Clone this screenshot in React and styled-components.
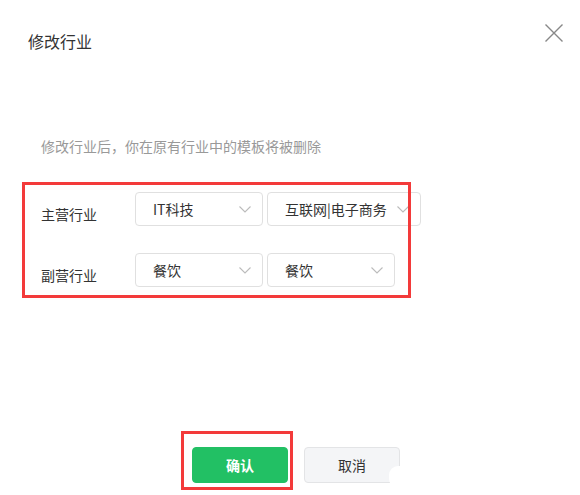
import React from 'react';
import styled, {createGlobalStyle} from 'styled-components';

const GlobalStyle = createGlobalStyle`
  html, body {
    margin: 0;
    padding: 0;
    background: #fff;
  }
  body {
    font-family: "Noto Sans CJK SC", "Noto Sans", "Liberation Sans", sans-serif;
    color: #333;
  }
`;

const Dialog = styled.div`
  position: relative;
  width: 580px;
  height: 495px;
  background: #fff;
  box-sizing: border-box;
`;

const Header = styled.div`
  display: flex;
  justify-content: space-between;
  align-items: flex-start;
  padding: 29px 16px 0 28px;
  height: 60px;
  box-sizing: border-box;
`;

const Title = styled.h2`
  margin: 0;
  font-size: 16px;
  font-weight: 400;
  line-height: 24px;
  color: #333;
`;

const Close = styled.button`
  width: 20px;
  height: 20px;
  margin-top: -6px;
  padding: 0;
  border: none;
  background: none;
  cursor: pointer;
  svg { display: block; }
`;

const Hint = styled.p`
  margin: 76px 0 0 41px;
  font-size: 14px;
  line-height: 20px;
  color: #999;
`;

const FormArea = styled.div`
  position: relative;
  margin-top: 36px;
  display: flex;
  flex-direction: column;
  gap: 27px;
  padding-left: 41px;
`;

const Row = styled.div`
  display: flex;
  align-items: flex-start;
`;

const Label = styled.span`
  width: 94px;
  margin-top: 12px;
  font-size: 14px;
  line-height: 20px;
  color: #333;
`;

const Selects = styled.div`
  display: flex;
  gap: 4px;
`;

const Select = styled.div`
  display: flex;
  align-items: center;
  justify-content: space-between;
  gap: 10px;
  min-width: 128px;
  height: 34px;
  box-sizing: border-box;
  padding: 0 11px 0 17px;
  border: 1px solid #e0e0e0;
  border-radius: 4px;
  background: #fff;
  font-size: 14px;
  color: #333;
  white-space: nowrap;
`;

const Mark = styled.div`
  position: absolute;
  left: ${p => p.$left}px;
  top: ${p => p.$top}px;
  width: ${p => p.$w}px;
  height: ${p => p.$h}px;
  border: 3px solid #f33a3a;
  box-sizing: border-box;
  pointer-events: none;
`;

const Footer = styled.div`
  position: relative;
  display: flex;
  justify-content: center;
  gap: 16px;
  padding-left: 12px;
  margin-top: 160px;
`;

const Button = styled.button`
  width: 96px;
  height: 36px;
  border-radius: 4px;
  font-family: inherit;
  font-size: 14px;
  cursor: pointer;
  border: 1px solid ${p => (p.$primary ? '#22c064' : '#e3e4e6')};
  background: ${p => (p.$primary ? '#22c064' : '#f4f5f7')};
  color: ${p => (p.$primary ? '#fff' : '#333')};
  font-weight: ${p => (p.$primary ? 600 : 400)};
`;

const Blot = styled.div`
  position: absolute;
  left: 389px;
  top: 19px;
  width: 14px;
  height: 22px;
  border-radius: 9px 0 0 9px;
  background: #fff;
`;

const Chevron = () => (
  <svg width="12" height="7" viewBox="0 0 12 7" fill="none">
    <path d="M0.5 0.5 L6 6 L11.5 0.5" stroke="#bbb" strokeWidth="1.1" />
  </svg>
);

const Picker = ({value}) => (
  <Select>
    <span>{value}</span>
    <Chevron />
  </Select>
);

export default function App() {
  return (
    <Dialog>
      <GlobalStyle />
      <Header>
        <Title>修改行业</Title>
        <Close aria-label="关闭">
          <svg width="20" height="20" viewBox="0 0 20 20">
            <path d="M1.5 1.5 L18.5 18.5 M18.5 1.5 L1.5 18.5" stroke="#888" strokeWidth="1.4" />
          </svg>
        </Close>
      </Header>
      <Hint>修改行业后，你在原有行业中的模板将被删除</Hint>
      <FormArea>
        <Row>
          <Label>主营行业</Label>
          <Selects>
            <Picker value="IT科技" />
            <Picker value="互联网|电子商务" />
          </Selects>
        </Row>
        <Row>
          <Label>副营行业</Label>
          <Selects>
            <Picker value="餐饮" />
            <Picker value="餐饮" />
          </Selects>
        </Row>
        <Mark $left={22} $top={-10} $w={389} $h={116} />
      </FormArea>
      <Footer>
        <Button $primary>确认</Button>
        <Button>取消</Button>
        <Blot />
        <Mark $left={181} $top={-16} $w={112} $h={59} />
      </Footer>
    </Dialog>
  );
}
